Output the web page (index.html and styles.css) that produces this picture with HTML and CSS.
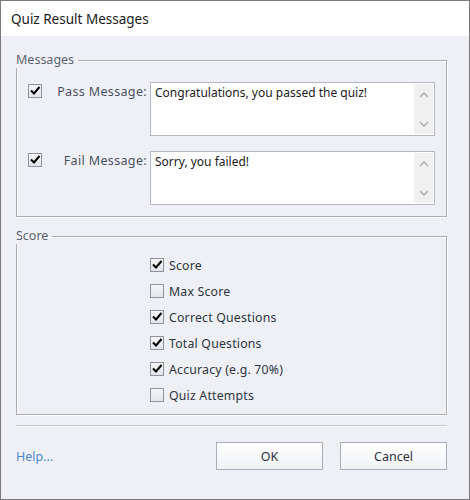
FILE: index.html
```html
<!DOCTYPE html>
<html>
<head>
<meta charset="utf-8">
<link rel="stylesheet" href="styles.css">
</head>
<body>
<div class="window">
  <div class="titlebar">Quiz Result Messages</div>
  <div class="content">
    <fieldset class="group">
      <legend>Messages</legend>
      <div class="messages">
        <div class="msg-row">
          <span class="cb checked"><svg viewBox="0 0 14 14"><path d="M3 6.5 L6 9.5 L11.5 3"/></svg></span>
          <span class="msg-label">Pass Message:</span>
          <div class="textbox">
            <div class="tb-text">Congratulations, you passed the quiz!</div>
            <div class="tb-scroll">
              <svg viewBox="0 0 12 8"><path d="M2 6 L6 2 L10 6"/></svg>
              <svg viewBox="0 0 12 8"><path d="M2 2 L6 6 L10 2"/></svg>
            </div>
          </div>
        </div>
        <div class="msg-row">
          <span class="cb checked"><svg viewBox="0 0 14 14"><path d="M3 6.5 L6 9.5 L11.5 3"/></svg></span>
          <span class="msg-label">Fail Message:</span>
          <div class="textbox">
            <div class="tb-text">Sorry, you failed!</div>
            <div class="tb-scroll">
              <svg viewBox="0 0 12 8"><path d="M2 6 L6 2 L10 6"/></svg>
              <svg viewBox="0 0 12 8"><path d="M2 2 L6 6 L10 2"/></svg>
            </div>
          </div>
        </div>
      </div>
    </fieldset>

    <fieldset class="group score-group">
      <legend>Score</legend>
      <ul class="score-list">
        <li><span class="cb checked"><svg viewBox="0 0 14 14"><path d="M3 6.5 L6 9.5 L11.5 3"/></svg></span>Score</li>
        <li><span class="cb"></span>Max Score</li>
        <li><span class="cb checked"><svg viewBox="0 0 14 14"><path d="M3 6.5 L6 9.5 L11.5 3"/></svg></span>Correct Questions</li>
        <li><span class="cb checked"><svg viewBox="0 0 14 14"><path d="M3 6.5 L6 9.5 L11.5 3"/></svg></span>Total Questions</li>
        <li><span class="cb checked"><svg viewBox="0 0 14 14"><path d="M3 6.5 L6 9.5 L11.5 3"/></svg></span>Accuracy (e.g. 70%)</li>
        <li><span class="cb"></span>Quiz Attempts</li>
      </ul>
    </fieldset>

    <div class="separator"></div>

    <div class="footer">
      <a class="help">Help...</a>
      <div class="buttons">
        <button class="btn">OK</button>
        <button class="btn">Cancel</button>
      </div>
    </div>
  </div>
</div>
</body>
</html>
```

FILE: styles.css
```css
html, body {
  margin: 0;
  padding: 0;
  background: #eff0f5;
}

.window {
  width: 470px;
  height: 500px;
  box-sizing: border-box;
  border: 1px solid #7a7a7a;
  background: #eff0f5;
  font-family: "Noto Sans", "Open Sans", sans-serif;
  font-size: 11.5px;
  color: #333a45;
  display: flex;
  flex-direction: column;
}

.titlebar {
  height: 35px;
  background: #ffffff;
  padding-left: 10px;
  display: flex;
  align-items: center;
  font-size: 13.5px;
  color: #1a1a1a;
  flex-shrink: 0;
}

.content {
  padding: 16px 22px 0 15px;
  display: flex;
  flex-direction: column;
}

.group {
  margin: 0;
  padding: 0;
  border: 1px solid #a9adb8;
  box-shadow: inset 1px 1px 0 #ffffff, 1px 1px 0 #ffffff;
  min-width: 0;
}

.group legend {
  padding: 0 4px 0 0;
  margin-left: -1px;
  line-height: 16px;
  font-size: 12.5px;
  color: #5d626e;
}

.messages {
  padding: 14px 11px 11px 11px;
  display: flex;
  flex-direction: column;
  gap: 15px;
}

.msg-row {
  display: grid;
  grid-template-columns: 14px 1fr 285px;
  column-gap: 3px;
  align-items: start;
}

.msg-row .cb {
  margin-top: 2px;
}

.msg-label {
  text-align: right;
  padding-top: 1px;
  line-height: 18px;
  color: #4b5160;
  font-size: 12.5px;
  letter-spacing: 0.35px;
}

.textbox {
  height: 54px;
  box-sizing: border-box;
  border: 1px solid #b3b7c3;
  background: #ffffff;
  display: flex;
}

.tb-text {
  flex: 1;
  padding: 2px 4px;
  line-height: 16px;
  color: #1a1a1a;
  font-size: 12px;
}

.tb-scroll {
  width: 19px;
  margin: 1px 1px 1px 0;
  background: #f0f0f0;
  display: flex;
  flex-direction: column;
  justify-content: space-between;
  align-items: center;
  padding: 7px 0 6px;
}

.tb-scroll svg {
  width: 12px;
  height: 8px;
}

.tb-scroll path {
  fill: none;
  stroke: #a8a8a8;
  stroke-width: 1.4;
}

.cb {
  width: 14px;
  height: 14px;
  box-sizing: border-box;
  border: 1px solid #8e93a0;
  background: linear-gradient(#f6f6f8, #e3e5ea);
  display: inline-flex;
  align-items: center;
  justify-content: center;
  flex-shrink: 0;
}

.cb svg {
  width: 14px;
  height: 14px;
  margin: -1px;
}

.cb path {
  fill: none;
  stroke: #000000;
  stroke-width: 2;
}

.score-group {
  margin-top: 11px;
}

.score-list {
  list-style: none;
  margin: 0;
  padding: 8px 0 6px 133px;
}

.score-list li {
  height: 26px;
  display: flex;
  align-items: center;
  gap: 5px;
  font-size: 12.3px;
  letter-spacing: 0.2px;
  color: #2e3440;
}

.separator {
  margin-top: 10px;
  height: 1px;
  background: #c6c9d1;
  border-bottom: 1px solid #ffffff;
}

.footer {
  margin-top: 15px;
  display: flex;
  align-items: center;
  justify-content: space-between;
}

.help {
  color: #4b8acb;
  font-size: 12.5px;
}

.buttons {
  display: flex;
  gap: 17px;
}

.btn {
  width: 107px;
  height: 28px;
  border: 1px solid #a9adb8;
  background: linear-gradient(#ffffff, #f1f2f5);
  font-family: "Noto Sans", "Open Sans", sans-serif;
  font-size: 12.5px;
  color: #2e3440;
  padding: 0;
}
```
